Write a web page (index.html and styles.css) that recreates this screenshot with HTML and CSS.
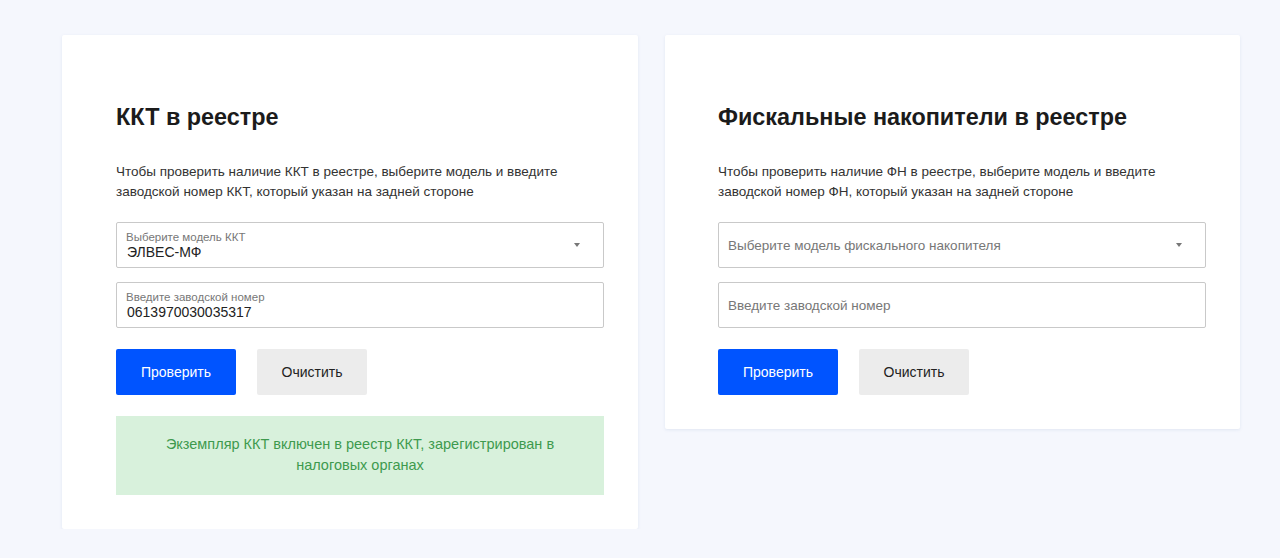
FILE: index.html
```html
<!DOCTYPE html>
<html>
	<head>
		<meta charset="UTF-8">
		<title>Проверка ККТ и ФН</title>
		<link rel="stylesheet" href="styles.css">
	</head>
	<body>
		<div class="page">
			<div class="card">
				<h2 class="title">ККТ в реестре</h2>
				<p class="descr">Чтобы проверить наличие ККТ в реестре, выберите модель и введите заводской номер ККТ, который указан на задней стороне</p>
				<div class="field field-select">
					<div class="field-body">
						<span class="field-label">Выберите модель ККТ</span>
						<span class="field-value">ЭЛВЕС-МФ</span>
					</div>
					<span class="arrow"></span>
				</div>
				<div class="field">
					<div class="field-body">
						<span class="field-label">Введите заводской номер</span>
						<span class="field-value">0613970030035317</span>
					</div>
				</div>
				<div class="buttons">
					<button class="btn btn-primary">Проверить</button>
					<button class="btn btn-light">Очистить</button>
				</div>
				<div class="result">Экземпляр ККТ включен в реестр ККТ, зарегистрирован в налоговых органах</div>
			</div>
			<div class="card">
				<h2 class="title">Фискальные накопители в реестре</h2>
				<p class="descr">Чтобы проверить наличие ФН в реестре, выберите модель и введите заводской номер ФН, который указан на задней стороне</p>
				<div class="field field-select">
					<div class="field-body">
						<span class="placeholder">Выберите модель фискального накопителя</span>
					</div>
					<span class="arrow"></span>
				</div>
				<div class="field">
					<div class="field-body">
						<span class="placeholder">Введите заводской номер</span>
					</div>
				</div>
				<div class="buttons">
					<button class="btn btn-primary">Проверить</button>
					<button class="btn btn-light">Очистить</button>
				</div>
			</div>
		</div>
	</body>
</html>
```

FILE: styles.css
```css
html, body{
	margin: 0;
	padding: 0;
}
body{
	background-color: #f5f7fd;
	font-family: "Liberation Sans", Arial, sans-serif;
	color: #222;
}
.page{
	display: flex;
	align-items: flex-start;
	gap: 27px;
	padding: 35px 40px 0 62px;
}
.card{
	width: 576px;
	box-sizing: border-box;
	background-color: #fff;
	padding: 67px 34px 34px 54px;
	box-shadow: 0 1px 3px rgba(200, 210, 230, .45);
	border-radius: 2px;
}
.card + .card{
	width: 575px;
	padding-left: 53px;
}
.title{
	margin: 0;
	font-size: 23.4px;
	line-height: 30px;
	font-weight: bold;
	color: #1b1b1b;
}
.descr{
	margin: 30px 0 0 0;
	font-size: 13.5px;
	line-height: 20px;
	color: #333;
	width: 488px;
}
.field{
	width: 488px;
	height: 46px;
	box-sizing: border-box;
	border: 1px solid #c9c9c9;
	border-radius: 2px;
	margin-top: 14px;
	display: flex;
	align-items: center;
	padding: 0 10px 0 9px;
}
.field-select{
	margin-top: 20px;
	padding-right: 23px;
}
.field-body{
	flex: 1;
	display: flex;
	flex-direction: column;
}
.field-label{
	font-size: 11.5px;
	line-height: 13px;
	color: #777;
}
.field-value{
	font-size: 14px;
	line-height: 16px;
	color: #222;
	padding-left: 1px;
}
.placeholder{
	font-size: 13.5px;
	color: #777;
}
.arrow{
	width: 0;
	height: 0;
	border-left: 3px solid transparent;
	border-right: 3px solid transparent;
	border-top: 4px solid #777;
}
.buttons{
	display: flex;
	gap: 21px;
	margin-top: 21px;
}
.btn{
	height: 46px;
	border: none;
	border-radius: 2px;
	font-family: inherit;
	font-size: 14px;
	cursor: pointer;
}
.btn-primary{
	width: 120px;
	background-color: #0054ff;
	color: #fff;
}
.btn-light{
	width: 110px;
	background-color: #ececec;
	color: #222;
}
.result{
	margin-top: 21px;
	width: 488px;
	height: 79px;
	box-sizing: border-box;
	background-color: #d8f1dc;
	color: #3e9a4e;
	font-size: 14.5px;
	line-height: 21px;
	text-align: center;
	padding: 18px 30px 0;
}
```
